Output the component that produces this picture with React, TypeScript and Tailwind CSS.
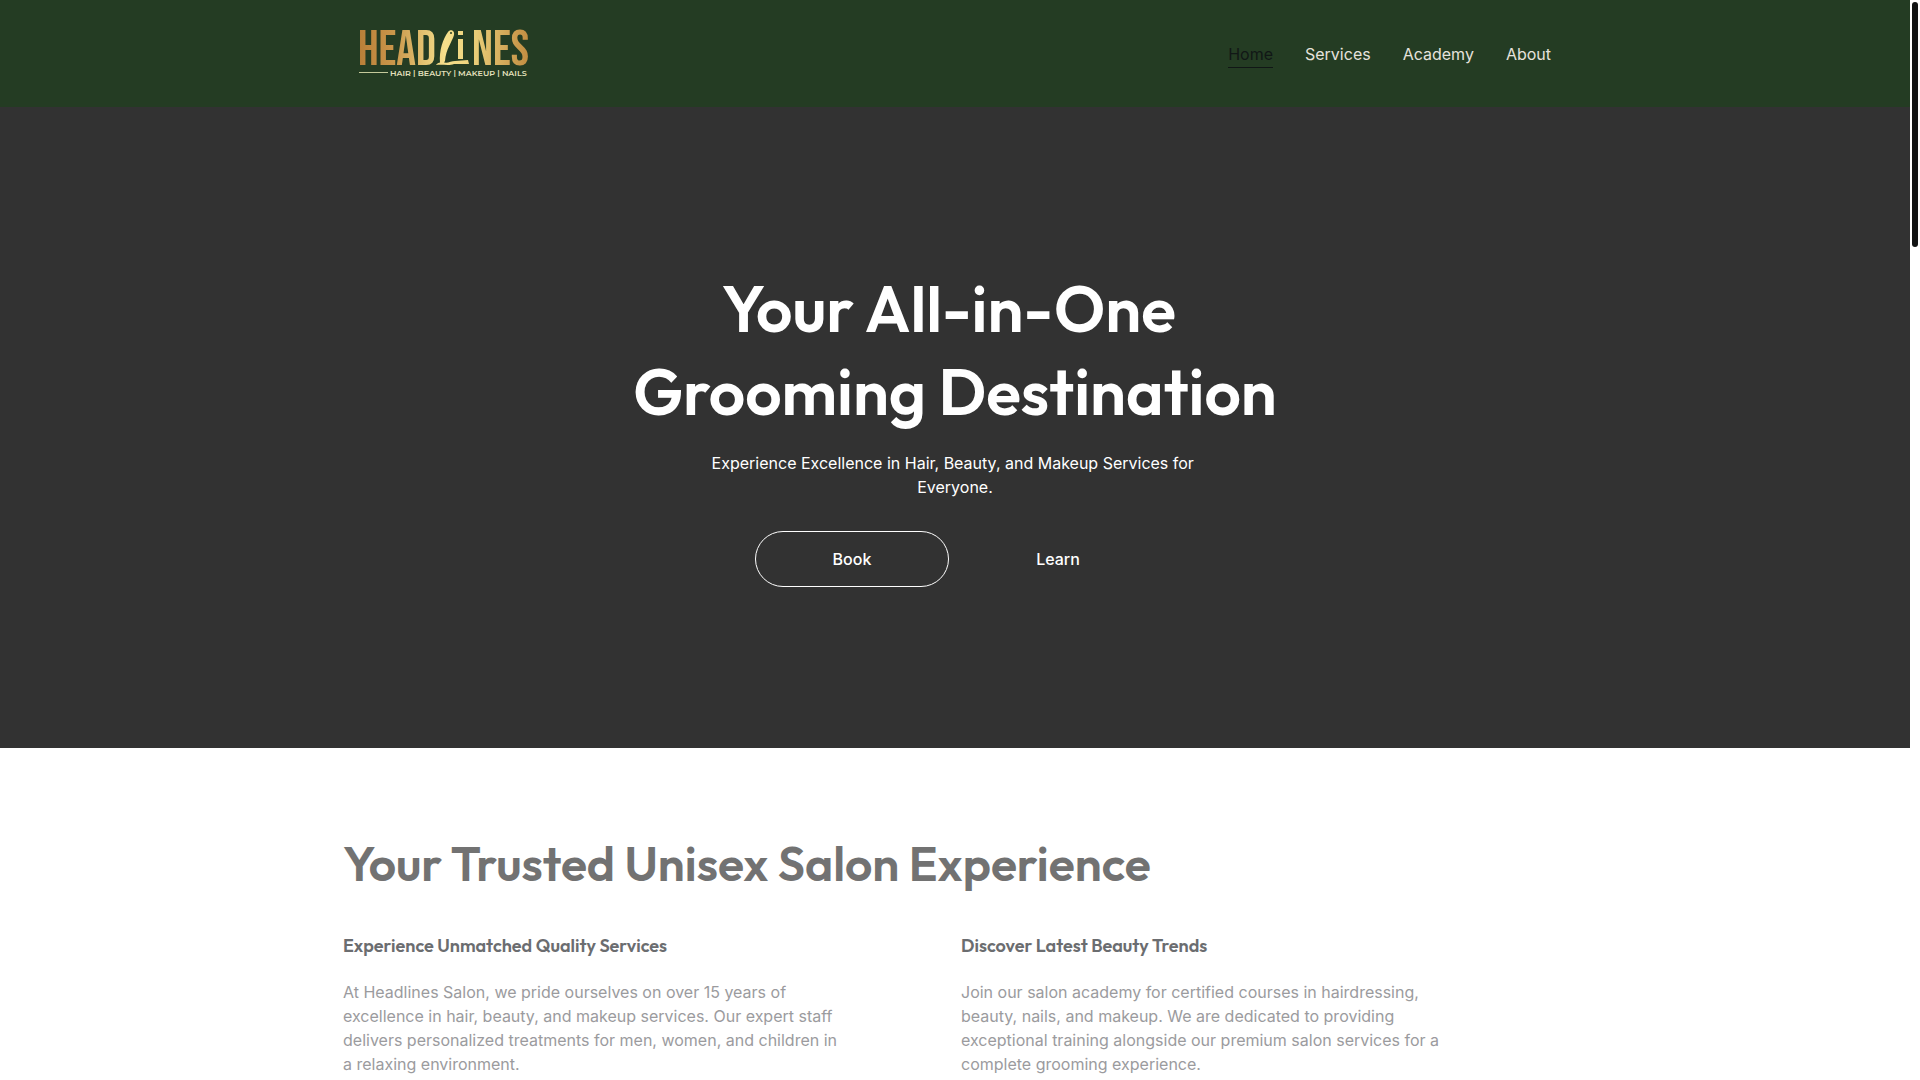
import { clsx } from "clsx";

const navLinks = [
  { label: "Home", active: true },
  { label: "Services", active: false },
  { label: "Academy", active: false },
  { label: "About", active: false },
];

const features = [
  {
    title: "Experience Unmatched Quality Services",
    text: "At Headlines Salon, we pride ourselves on over 15 years of excellence in hair, beauty, and makeup services. Our expert staff delivers personalized treatments for men, women, and children in a relaxing environment.",
  },
  {
    title: "Discover Latest Beauty Trends",
    text: "Join our salon academy for certified courses in hairdressing, beauty, nails, and makeup. We are dedicated to providing exceptional training alongside our premium salon services for a complete grooming experience.",
  },
];

function Logo() {
  return (
    <svg
      className="overflow-visible"
      width="172"
      height="49"
      viewBox="0 0 172 49"
      role="img"
      aria-label="Headlines"
    >
      <defs>
        <linearGradient id="gold" gradientUnits="userSpaceOnUse" x1="0" y1="0" x2="172" y2="0">
          <stop offset="0" stopColor="#b97f38" />
          <stop offset="0.2" stopColor="#c9964a" />
          <stop offset="0.5" stopColor="#f6e08c" />
          <stop offset="0.65" stopColor="#ecd27c" />
          <stop offset="1" stopColor="#c08a3f" />
        </linearGradient>
      </defs>
      <g
        fill="url(#gold)"
        fontFamily="'Bebas Neue', 'League Gothic', Oswald, 'Liberation Sans', sans-serif"
        fontSize="49"
      >
        <text x="-1" y="36">HEAD</text>
        <text x="113" y="36">NES</text>
      </g>
      {/* razor */}
      <g fill="url(#gold)">
        <path d="M89 3 C91 0 96 1 95 6 C93 13 87 20 86 32 L84 35 L81 34 C80 21 84 10 89 3 Z" />
        <path d="M99 10 H104 V30 H99 Z" />
        <path d="M99 2 H104 V6 H99 Z" />
        <path d="M77 36 C79 33 81 34 84 33 C88 35 92 32 96 32 L109 31 L110 35 L95 35 C90 37 83 35 77 36 Z" />
      </g>
      <circle cx="92" cy="4" r="1" fill="#243c23" />
      <path d="M0 43.500 H29" stroke="#c5ca9b" strokeWidth="1" />
      <text x="31" y="47" fill="#e3e0bd" fontFamily="Montserrat, Inter, sans-serif" fontSize="8" fontWeight="600">
        HAIR | BEAUTY | MAKEUP | NAILS
      </text>
    </svg>
  );
}

function Header() {
  return (
    <header className="bg-[#243c23]">
      <div className="mx-auto flex h-[107px] max-w-[1224px] items-center justify-between px-4">
        <a href="#home">
          <Logo />
        </a>
        <nav className="flex gap-8 pt-[2px]">
          {navLinks.map((link) => (
            <a
              key={link.label}
              href={`#${link.label.toLowerCase()}`}
              className={clsx(
                "border-b leading-[26px]",
                link.active ? "border-[#111716] text-[#111716]" : "border-transparent text-[#e6e2dc]",
              )}
            >
              {link.label}
            </a>
          ))}
        </nav>
      </div>
    </header>
  );
}

function Hero() {
  return (
    <section id="home" className="bg-[#323232] px-4 py-40 text-center text-white">
      <h1 className="mx-auto max-w-[720px] font-[Outfit,Lato,sans-serif] text-[64px] leading-[83px] font-semibold whitespace-break-spaces">
        Your All-in-One Grooming Destination
      </h1>
      <p className="mx-auto mt-[18px] max-w-[504px] leading-6 whitespace-break-spaces">
        Experience Excellence in Hair, Beauty, and Makeup Services for Everyone.
      </p>
      <div className="mt-8 mb-px flex justify-center gap-3">
        <button type="button" className="h-14 w-[194px] rounded-full border border-white font-medium">
          Book
        </button>
        <button type="button" className="h-14 w-[194px] rounded-full font-medium">
          Learn
        </button>
      </div>
    </section>
  );
}

function Features() {
  return (
    <section id="about" className="mx-auto max-w-[1224px] pt-[84px]">
      <h2 className="font-[Outfit,Lato,sans-serif] text-[48px] leading-[62px] font-semibold text-[#727272]">
        Your Trusted Unisex Salon Experience
      </h2>
      <div className="mt-10 grid grid-cols-2 gap-3">
        {features.map((item) => (
          <article key={item.title} className="max-w-[504px]">
            <h3 className="font-[Outfit,Lato,sans-serif] text-lg leading-6 font-semibold text-[#6b6d70]">
              {item.title}
            </h3>
            <p className="mt-[22px] leading-6 text-[#9b9b9e]">{item.text}</p>
          </article>
        ))}
      </div>
    </section>
  );
}

export default function App() {
  return (
    <div className="flex min-h-screen bg-white font-[Inter,sans-serif] text-base">
      <main className="min-w-0 flex-1">
        <Header />
        <Hero />
        <Features />
      </main>
      {/* page scroll track */}
      <div className="w-[10px] shrink-0 p-[2px]">
        <div className="h-[245px] rounded-full bg-[#111313]" />
      </div>
    </div>
  );
}
